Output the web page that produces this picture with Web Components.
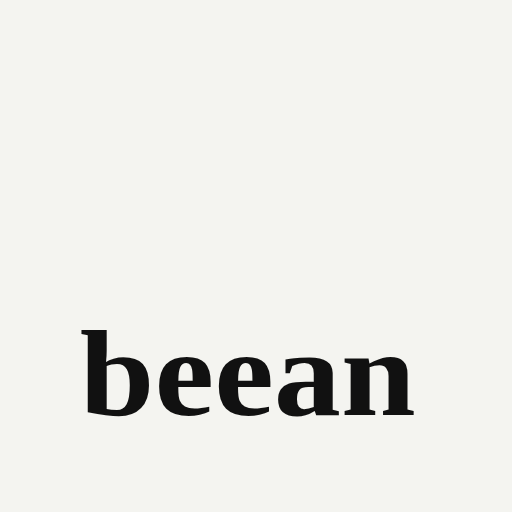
<!DOCTYPE html>
<html>
<head>
<meta charset="utf-8">
<style>
  html, body { margin: 0; padding: 0; height: 100%; background: #f4f4f0; }
</style>
</head>
<body>
<splash-screen><brand-logo>beean</brand-logo></splash-screen>
<script>
class SplashScreen extends HTMLElement {
  constructor() {
    super();
    this.attachShadow({ mode: 'open' });
    this.shadowRoot.innerHTML = `
      <style>
        :host {
          display: flex;
          width: 512px;
          height: 512px;
          box-sizing: border-box;
          background: #f4f4f0;
          align-items: flex-end;
          justify-content: center;
          padding-bottom: 77px;
          padding-right: 16px;
        }
      </style>
      <slot></slot>
    `;
  }
}

class BrandLogo extends HTMLElement {
  constructor() {
    super();
    this.attachShadow({ mode: 'open' });
    this.shadowRoot.innerHTML = `
      <style>
        :host {
          display: block;
          font-family: "Liberation Serif", serif;
          font-weight: 700;
          font-size: 123px;
          line-height: 1;
          color: #111;
          transform: scaleX(1.092);
        }
      </style>
      <slot></slot>
    `;
  }
}

customElements.define('splash-screen', SplashScreen);
customElements.define('brand-logo', BrandLogo);
</script>
</body>
</html>
